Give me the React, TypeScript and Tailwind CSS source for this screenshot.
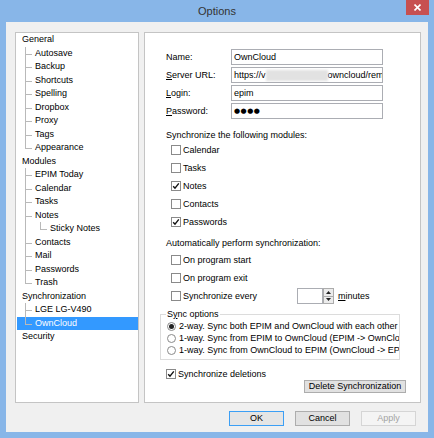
type Node = { t: string; l: number; last?: boolean; sel?: boolean };

const tree: Node[] = [
  { t: "General", l: 0 },
  { t: "Autosave", l: 1 },
  { t: "Backup", l: 1 },
  { t: "Shortcuts", l: 1 },
  { t: "Spelling", l: 1 },
  { t: "Dropbox", l: 1 },
  { t: "Proxy", l: 1 },
  { t: "Tags", l: 1 },
  { t: "Appearance", l: 1, last: true },
  { t: "Modules", l: 0 },
  { t: "EPIM Today", l: 1 },
  { t: "Calendar", l: 1 },
  { t: "Tasks", l: 1 },
  { t: "Notes", l: 1 },
  { t: "Sticky Notes", l: 2, last: true },
  { t: "Contacts", l: 1 },
  { t: "Mail", l: 1 },
  { t: "Passwords", l: 1 },
  { t: "Trash", l: 1, last: true },
  { t: "Synchronization", l: 0 },
  { t: "LGE LG-V490", l: 1 },
  { t: "OwnCloud", l: 1, last: true, sel: true },
  { t: "Security", l: 0 },
];

const lineColor = "#b9b9b9";

function Connector({ node }: { node: Node }) {
  if (node.l === 0) return <span className="w-[4px]" />;
  if (node.l === 1)
    return (
      <svg width="17" height="13.5" className="shrink-0" shapeRendering="crispEdges">
        <rect x="8" y="0" width="1" height={node.last ? 7 : 13.5} fill={lineColor} />
        <rect x="8" y="6.5" width="7" height="1" fill={lineColor} />
      </svg>
    );
  return (
    <svg width="32" height="13.5" className="shrink-0" shapeRendering="crispEdges">
      <rect x="8" y="0" width="1" height="13.5" fill={lineColor} />
      <rect x="23" y="0" width="1" height="7" fill={lineColor} />
      <rect x="23" y="6.5" width="7" height="1" fill={lineColor} />
    </svg>
  );
}

function Check({ checked = false }: { checked?: boolean }) {
  return (
    <span className="w-[10px] h-[10px] shrink-0 border border-[#8a8a8a] bg-white flex items-center justify-center">
      {checked && (
        <svg width="8" height="8" viewBox="0 0 8 8">
          <path d="M1.2 4.2 L3 6.2 L6.8 1.4" stroke="#111" strokeWidth="1.4" fill="none" />
        </svg>
      )}
    </span>
  );
}

function CheckRow({ label, checked, h = "h-[18px]" }: { label: React.ReactNode; checked?: boolean; h?: string }) {
  return (
    <div className={`flex items-center ${h}`}>
      <Check checked={checked} />
      <span className="ml-[2px]">{label}</span>
    </div>
  );
}

function Radio({ label, on = false }: { label: string; on?: boolean }) {
  return (
    <div className="flex items-center h-[12px]">
      <span className="w-[9px] h-[9px] shrink-0 rounded-full border border-[#8a8a8a] bg-white flex items-center justify-center">
        {on && <span className="w-[5px] h-[5px] rounded-full bg-[#222]" />}
      </span>
      <span className="ml-[3px]">{label}</span>
    </div>
  );
}

function Field({ label, children }: { label: React.ReactNode; children: React.ReactNode }) {
  return (
    <div className="flex items-center h-[16px]">
      <span className="w-[65px]">{label}</span>
      <div className="w-[152px] h-[16px] border border-[#abadb3] bg-white flex items-center pl-[2px] overflow-hidden whitespace-nowrap">
        {children}
      </div>
    </div>
  );
}

function Button({ children, def, disabled, className = "" }: { children: React.ReactNode; def?: boolean; disabled?: boolean; className?: string }) {
  return (
    <div
      className={`flex items-center justify-center border ${
        disabled
          ? "border-[#d5d5d5] bg-[#f4f4f4] text-[#a3a3a3]"
          : def
          ? "border-[#3c9ff5] bg-[#e5e5e5]"
          : "border-[#adadad] bg-[#e1e1e1]"
      } ${className}`}
    >
      {children}
    </div>
  );
}

export default function App() {
  return (
    <div
      className="w-[434px] h-[438px] bg-[#88b6e8] flex flex-col text-[9px] leading-[11px] text-black"
      style={{ fontFamily: '"Liberation Sans", Arial, sans-serif' }}
    >
      <div className="relative h-[22px] flex items-center justify-center">
        <span className="text-[11px] text-[#333] mt-[1px]">Options</span>
        <div className="absolute right-[5px] top-0 w-[23px] h-[15px] bg-[#c75050] flex items-center justify-center">
          <svg width="7" height="7" viewBox="0 0 7 7">
            <path d="M0.5 0.5 L6.5 6.5 M6.5 0.5 L0.5 6.5" stroke="#fff" strokeWidth="1.6" />
          </svg>
        </div>
      </div>

      <div className="mx-[6px] mb-[6px] flex-1 bg-[#f0f0f0] flex flex-col pt-[10px] pl-[9px] pr-[7px]">
        <div className="flex gap-[5px] h-[371px]">
          {/* tree */}
          <div className="w-[124px] border border-[#c4c4c4] bg-white pl-[1px]">
            {tree.map((n) => (
              <div
                key={n.t}
                className={`flex items-center h-[13.5px] ${n.sel ? "bg-[#3399ff] text-white" : ""}`}
              >
                <Connector node={n} />
                <span className="ml-[1px] whitespace-nowrap">{n.t}</span>
              </div>
            ))}
          </div>

          {/* settings */}
          <div className="w-[277px] border border-[#c4c4c4] bg-white pl-[21px] pt-[16px] flex flex-col">
            <div className="flex flex-col gap-[2px]">
              <Field label="Name:">OwnCloud</Field>
              <Field
                label={
                  <>
                    <u>S</u>erver URL:
                  </>
                }
              >
                <span>https://v</span>
                <span className="w-[62px] h-[11px] bg-[#e2e2e2] blur-[1px] shrink-0" />
                <span>owncloud/remote.php</span>
              </Field>
              <Field
                label={
                  <>
                    <u>L</u>ogin:
                  </>
                }
              >
                epim
              </Field>
              <Field
                label={
                  <>
                    <u>P</u>assword:
                  </>
                }
              >
                <span className="text-[7px] tracking-[0.5px]" style={{ fontFamily: '"DejaVu Sans", sans-serif' }}>
                  ●●●●
                </span>
              </Field>
            </div>

            <div className="mt-[11px]">Synchronize the following modules:</div>
            <div className="pl-[5px]">
              <CheckRow label="Calendar" />
              <CheckRow label="Tasks" />
              <CheckRow label="Notes" checked />
              <CheckRow label="Contacts" />
              <CheckRow label="Passwords" checked />
            </div>

            <div className="mt-[7px]">Automatically perform synchronization:</div>
            <div className="pl-[5px] mt-[2px]">
              <CheckRow label="On program start" />
              <CheckRow label="On program exit" />
              <div className="flex items-center h-[18px]">
                <Check />
                <span className="ml-[2px] w-[112px]">Synchronize every</span>
                <div className="ml-[2px] w-[26px] h-[16px] border border-[#abadb3] bg-white" />
                <div className="w-[11px] h-[16px] flex flex-col">
                  <div className="flex-1 border border-[#acacac] bg-[#ececec] flex items-center justify-center">
                    <svg width="5" height="3" viewBox="0 0 5 3">
                      <path d="M0 3 L2.5 0 L5 3 Z" fill="#222" />
                    </svg>
                  </div>
                  <div className="flex-1 border border-t-0 border-[#acacac] bg-[#ececec] flex items-center justify-center">
                    <svg width="5" height="3" viewBox="0 0 5 3">
                      <path d="M0 0 L5 0 L2.5 3 Z" fill="#222" />
                    </svg>
                  </div>
                </div>
                <span className="ml-[4px]">
                  <u>m</u>inutes
                </span>
              </div>
            </div>

            <fieldset className="mt-[4px] ml-[-6px] w-[240px] border border-[#dcdcdc] pl-[5px] pb-[3px] min-w-0">
              <legend className="px-[1px]">
                S<u>y</u>nc options
              </legend>
              <div className="ml-[1px] overflow-hidden whitespace-nowrap">
                <Radio label="2-way. Sync both EPIM and OwnCloud with each other" on />
                <Radio label="1-way. Sync from EPIM to OwnCloud (EPIM -> OwnCloud)" />
                <Radio label="1-way. Sync from OwnCloud to EPIM (OwnCloud -> EPIM)" />
              </div>
            </fieldset>

            <div className="mt-[8px]">
              <CheckRow label="Synchronize deletions" checked h="h-[12px]" />
            </div>
            <div className="flex justify-end pr-[14px]">
              <Button className="w-[102px] h-[13px]">Delete Synchronization</Button>
            </div>
          </div>
        </div>

        <div className="mt-[8px] flex justify-end gap-[11px] pr-[5px]">
          <Button def className="w-[55px] h-[15px]">OK</Button>
          <Button className="w-[55px] h-[15px]">Cancel</Button>
          <Button disabled className="w-[55px] h-[15px]">Apply</Button>
        </div>
      </div>
    </div>
  );
}
